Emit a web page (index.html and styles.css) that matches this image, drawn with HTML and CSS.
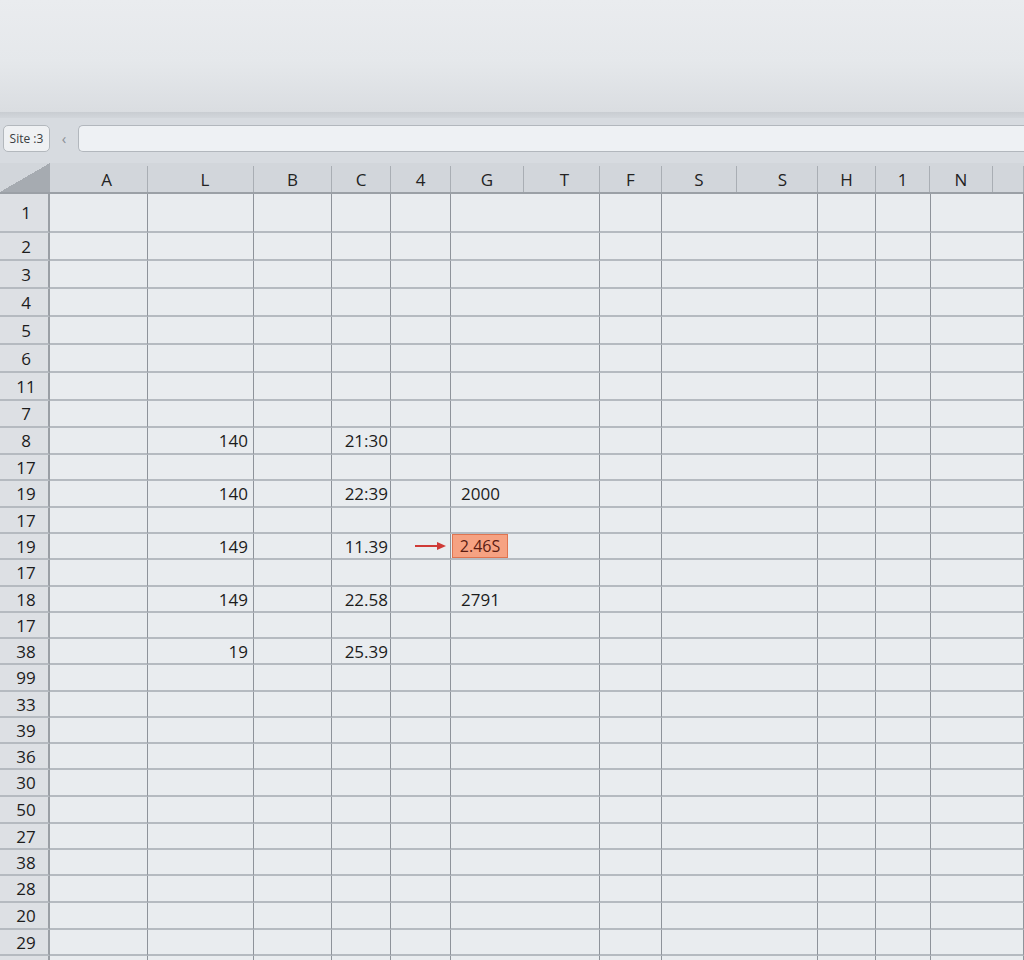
FILE: index.html
```html
<!DOCTYPE html>
<html lang="en">
<head>
    <meta charset="UTF-8">
    <meta name="viewport" content="width=device-width, initial-scale=1.0">
    <title>Sheet</title>
    <link rel="stylesheet" href="styles.css">
</head>
<body>
<!-- empty ribbon area -->
<div class="ribbon"></div>
<div class="ribbon-edge"></div>

<!-- name box + formula input -->
<div class="formula-bar">
    <div class="name-box">Site :3</div>
    <span class="nav-arrow">&lsaquo;</span>
    <div class="formula-input"></div>
</div>

<!-- column headers -->
<div class="col-heads">
    <div class="corner"></div>
    <div class="shift-a">A</div><div class="shift-l">L</div><div>B</div><div>C</div><div>4</div><div>G</div><div class="shift-t">T</div>
    <div>F</div><div>S</div><div class="shift-s">S</div><div>H</div><div>1</div><div>N</div><div></div>
</div>

<!-- cells -->
<div class="sheet">
    <div class="rh">1</div><div></div><div></div><div></div><div></div><div></div><div></div><div></div><div></div><div></div><div></div><div></div>
    <div class="rh">2</div><div></div><div></div><div></div><div></div><div></div><div></div><div></div><div></div><div></div><div></div><div></div>
    <div class="rh">3</div><div></div><div></div><div></div><div></div><div></div><div></div><div></div><div></div><div></div><div></div><div></div>
    <div class="rh">4</div><div></div><div></div><div></div><div></div><div></div><div></div><div></div><div></div><div></div><div></div><div></div>
    <div class="rh">5</div><div></div><div></div><div></div><div></div><div></div><div></div><div></div><div></div><div></div><div></div><div></div>
    <div class="rh">6</div><div></div><div></div><div></div><div></div><div></div><div></div><div></div><div></div><div></div><div></div><div></div>
    <div class="rh">11</div><div></div><div></div><div></div><div></div><div></div><div></div><div></div><div></div><div></div><div></div><div></div>
    <div class="rh">7</div><div></div><div></div><div></div><div></div><div></div><div></div><div></div><div></div><div></div><div></div><div></div>
    <div class="rh">8</div><div></div><div class="num">140</div><div></div><div class="num tight">21:30</div><div></div><div></div><div></div><div></div><div></div><div></div><div></div>
    <div class="rh">17</div><div></div><div></div><div></div><div></div><div></div><div></div><div></div><div></div><div></div><div></div><div></div>
    <div class="rh">19</div><div></div><div class="num">140</div><div></div><div class="num tight">22:39</div><div></div><div class="lft">2000</div><div></div><div></div><div></div><div></div><div></div>
    <div class="rh">17</div><div></div><div></div><div></div><div></div><div></div><div></div><div></div><div></div><div></div><div></div><div></div>
    <div class="rh">19</div><div></div><div class="num">149</div><div></div><div class="num tight">11.39</div>
    <div class="arrow-cell">
        <svg width="32" height="10" viewBox="0 0 32 10"><line x1="0" y1="5" x2="24" y2="5" stroke="#cf3a36" stroke-width="2"/><polygon points="22,1 31,5 22,9" fill="#cf3a36"/></svg>
    </div>
    <div class="hl-cell"><span class="hl">2.46S</span></div><div></div><div></div><div></div><div></div><div></div>
    <div class="rh">17</div><div></div><div></div><div></div><div></div><div></div><div></div><div></div><div></div><div></div><div></div><div></div>
    <div class="rh">18</div><div></div><div class="num">149</div><div></div><div class="num tight">22.58</div><div></div><div class="lft">2791</div><div></div><div></div><div></div><div></div><div></div>
    <div class="rh">17</div><div></div><div></div><div></div><div></div><div></div><div></div><div></div><div></div><div></div><div></div><div></div>
    <div class="rh">38</div><div></div><div class="num">19</div><div></div><div class="num tight">25.39</div><div></div><div></div><div></div><div></div><div></div><div></div><div></div>
    <div class="rh">99</div><div></div><div></div><div></div><div></div><div></div><div></div><div></div><div></div><div></div><div></div><div></div>
    <div class="rh">33</div><div></div><div></div><div></div><div></div><div></div><div></div><div></div><div></div><div></div><div></div><div></div>
    <div class="rh">39</div><div></div><div></div><div></div><div></div><div></div><div></div><div></div><div></div><div></div><div></div><div></div>
    <div class="rh">36</div><div></div><div></div><div></div><div></div><div></div><div></div><div></div><div></div><div></div><div></div><div></div>
    <div class="rh">30</div><div></div><div></div><div></div><div></div><div></div><div></div><div></div><div></div><div></div><div></div><div></div>
    <div class="rh">50</div><div></div><div></div><div></div><div></div><div></div><div></div><div></div><div></div><div></div><div></div><div></div>
    <div class="rh">27</div><div></div><div></div><div></div><div></div><div></div><div></div><div></div><div></div><div></div><div></div><div></div>
    <div class="rh">38</div><div></div><div></div><div></div><div></div><div></div><div></div><div></div><div></div><div></div><div></div><div></div>
    <div class="rh">28</div><div></div><div></div><div></div><div></div><div></div><div></div><div></div><div></div><div></div><div></div><div></div>
    <div class="rh">20</div><div></div><div></div><div></div><div></div><div></div><div></div><div></div><div></div><div></div><div></div><div></div>
    <div class="rh">29</div><div></div><div></div><div></div><div></div><div></div><div></div><div></div><div></div><div></div><div></div><div></div>
    <div class="rh"></div><div></div><div></div><div></div><div></div><div></div><div></div><div></div><div></div><div></div><div></div><div></div>
</div>
</body>
</html>
```

FILE: styles.css
```css
body {
    margin: 0;
    font-family: "Open Sans", "Liberation Sans", sans-serif;
    color: #222;
    background-color: #e8ebee;
    height: 960px;
    overflow: hidden;
}
.ribbon {
    height: 112px;
    background: linear-gradient(to bottom, #eaecef 0%, #e5e8eb 55%, #dadde1 100%);
}
.ribbon-edge {
    height: 6px;
    background: linear-gradient(to bottom, #c9cdd2, #d2d6db);
}
.formula-bar {
    display: flex;
    align-items: flex-start;
    height: 27px;
    padding: 7px 0 11px 3px;
    background-color: #d7dbe0;
}
.name-box {
    width: 45px;
    height: 25px;
    line-height: 25px;
    text-align: center;
    font-size: 12px;
    color: #3a3d41;
    background-color: #eff1f3;
    border: 1px solid #b3b8bd;
    border-radius: 5px;
}
.nav-arrow {
    width: 28px;
    text-align: center;
    line-height: 27px;
    font-size: 15px;
    color: #8b9096;
}
.formula-input {
    flex: 1;
    height: 25px;
    background-color: #eef1f4;
    border: 1px solid #b2b7bd;
    border-right: none;
    border-radius: 5px 0 0 5px;
}
.col-heads {
    display: grid;
    grid-template-columns: 50px 98px 106px 78px 59px 60px 73px 76px 62px 75px 81px 58px 54px 63px 1fr;
    height: 29px;
    background-color: #d2d6db;
    border-bottom: 2px solid #9ba0a6;
}
.col-heads > div {
    display: flex;
    align-items: center;
    justify-content: center;
    font-size: 17px;
    color: #232323;
    border-right: 1px solid #a9aeb4;
    margin-top: 3px;
}
.col-heads > .shift-a {
    padding-left: 16px;
}
.col-heads > .shift-l {
    padding-left: 9px;
}
.col-heads > .shift-t {
    padding-left: 6px;
}
.col-heads > .shift-s {
    padding-left: 11px;
}
.col-heads > .corner {
    border-right: none;
    margin-top: 0;
    background: linear-gradient(to top left, #a6abb1 50%, transparent 50%);
}
.sheet {
    display: grid;
    grid-template-columns: 50px 98px 106px 78px 59px 60px 149px 62px 156px 58px 55px 1fr;
    grid-template-rows: 39px 28px 28px 28px 28px 28px 28px 27px 27px 26px 27px 26px 26px 27px 26px 26px 26px 27px 26px 26px 26px 27px 27px 26px 26px 27px 27px 26px 26px;
}
.sheet > div {
    display: flex;
    align-items: center;
    font-size: 17px;
    color: #1c1c1c;
    border-right: 1px solid #8e939a;
    border-bottom: 2px solid #b5bac0;
    background-color: #e9ecef;
}
.sheet > .rh {
    justify-content: center;
    padding-left: 4px;
    font-size: 17px;
    background-color: #dde0e4;
    border-right: 2px solid #9a9fa5;
}
.sheet > .num {
    justify-content: flex-end;
    padding-right: 5px;
}
.sheet > .tight {
    padding-right: 2px;
}
.sheet > .lft {
    padding-left: 10px;
}
.sheet > .arrow-cell {
    justify-content: flex-end;
    padding-right: 3px;
}
.sheet > .hl-cell {
    align-items: stretch;
}
.hl {
    display: flex;
    align-items: center;
    justify-content: center;
    width: 54px;
    margin-left: 1px;
    font-size: 16px;
    color: #5a1c12;
    background-color: #f6a282;
    border: 1px solid #df7450;
}
```
